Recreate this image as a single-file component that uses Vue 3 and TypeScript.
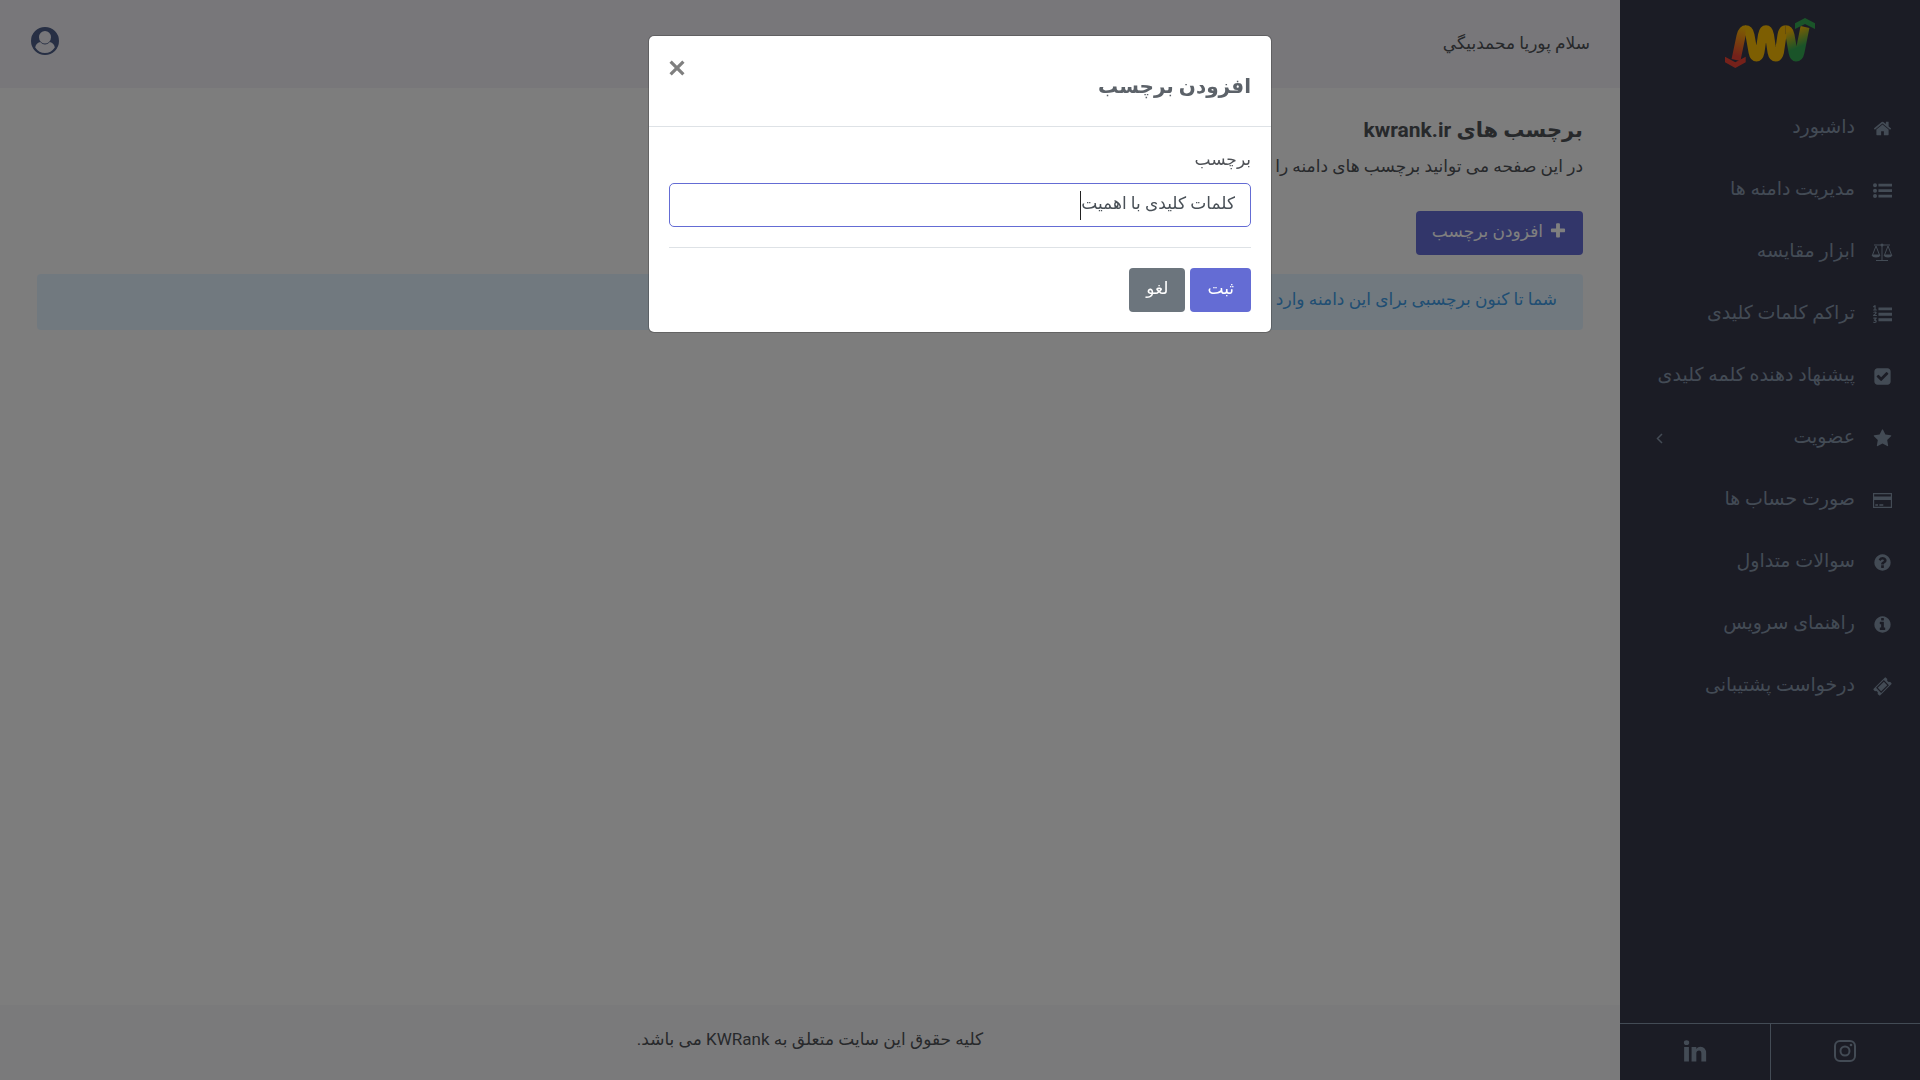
<script setup lang="ts">
import { ref } from 'vue'

interface MenuItem {
  label: string
  icon: string
  expandable?: boolean
}

const menu: MenuItem[] = [
  { label: 'داشبورد', icon: 'home' },
  { label: 'مدیریت دامنه ها', icon: 'list' },
  { label: 'ابزار مقایسه', icon: 'scale' },
  { label: 'تراکم کلمات کلیدی', icon: 'ordered' },
  { label: 'پیشنهاد دهنده کلمه کلیدی', icon: 'check' },
  { label: 'عضویت', icon: 'star', expandable: true },
  { label: 'صورت حساب ها', icon: 'card' },
  { label: 'سوالات متداول', icon: 'question' },
  { label: 'راهنمای سرویس', icon: 'info' },
  { label: 'درخواست پشتیبانی', icon: 'ticket' },
]

const icons: Record<string, string> = {
  home: 'M1472 992v480q0 26-19 45t-45 19h-384v-384h-256v384h-384q-26 0-45-19t-19-45v-480q0-1 .5-3t.5-3l575-474 575 474q1 2 1 6zm223-69l-62 74q-8 9-21 11h-3q-13 0-21-7l-692-577-692 577q-12 8-24 7-13-2-21-11l-62-74q-8-10-7-23.5t11-21.5l719-599q32-26 76-26t76 26l244 204v-195q0-14 9-23t23-9h192q14 0 23 9t9 23v408l219 182q10 8 11 21.5t-7 23.5z',
  list: 'M0 400a190 190 0 1 0 380 0a190 190 0 1 0-380 0zM0 912a190 190 0 1 0 380 0a190 190 0 1 0-380 0zM0 1424a190 190 0 1 0 380 0a190 190 0 1 0-380 0zM512 270h1280v260h-1280zM512 782h1280v260h-1280zM512 1294h1280v260h-1280z',
  ordered: 'M512 230h1280v270h-1280zM512 742h1280v270h-1280zM512 1254h1280v270h-1280zM130 20h120v400h110v90h-340v-90h110v-250l-80 60-60-70zM20 690q60-80 180-80 150 0 150 130 0 90-170 200h180v100h-350v-90q210-150 210-200 0-50-60-50-50 0-80 60zM30 1190h320v90l-110 110q120 30 120 150 0 160-180 160-110 0-170-60l60-90q50 50 100 50 70 0 70-60 0-70-150-60l-20-60 110-130h-150z',
  check: 'M813 1299l614-614q19-19 19-45t-19-45l-102-102q-19-19-45-19t-45 19l-467 467-211-211q-19-19-45-19t-45 19l-102 102q-19 19-19 45t19 45l358 358q19 19 45 19t45-19zm851-883v960q0 119-84.5 203.5t-203.5 84.5h-960q-119 0-203.5-84.5t-84.5-203.5v-960q0-119 84.5-203.5t203.5-84.5h960q119 0 203.5 84.5t84.5 203.5z',
  star: 'M1728 647q0 22-26 48l-363 354 86 500q1 7 1 20 0 21-10.5 35.5t-30.5 14.5q-19 0-40-12l-449-236-449 236q-22 12-40 12-21 0-31.5-14.5t-10.5-35.5q0-6 2-20l86-500-364-354q-25-27-25-48 0-37 56-46l502-73 225-455q19-41 49-41t49 41l225 455 502 73q56 9 56 46z',
  card: 'M0 200h1792v1400h-1792zM110 310v210h1572v-210zM110 850v640h1572v-640zM220 1260h250v130h-250zM600 1260h370v130h-370z',
  question: 'M1024 1376v-192q0-14-9-23t-23-9h-192q-14 0-23 9t-9 23v192q0 14 9 23t23 9h192q14 0 23-9t9-23zm256-672q0-88-55.5-163t-138.5-116-170-41q-243 0-371 213-15 24 8 42l132 100q7 6 19 6 16 0 25-12 53-68 86-92 34-24 86-24 48 0 85.5 26t37.5 59q0 38-20 61t-68 45q-63 28-115.5 86.5t-52.5 125.5v36q0 14 9 23t23 9h192q14 0 23-9t9-23q0-19 21.5-49.5t54.5-49.5q32-18 49-28.5t46-35 44.5-48 28-60.5 12.5-81zm384 192q0 209-103 385.5t-279.5 279.5-385.5 103-385.5-103-279.5-279.5-103-385.5 103-385.5 279.5-279.5 385.5-103 385.5 103 279.5 279.5 103 385.5z',
  info: 'M1152 1376v-160q0-14-9-23t-23-9h-96v-512q0-14-9-23t-23-9h-320q-14 0-23 9t-9 23v160q0 14 9 23t23 9h96v320h-96q-14 0-23 9t-9 23v160q0 14 9 23t23 9h448q14 0 23-9t9-23zm-128-896v-160q0-14-9-23t-23-9h-192q-14 0-23 9t-9 23v160q0 14 9 23t23 9h192q14 0 23-9t9-23zm640 416q0 209-103 385.5t-279.5 279.5-385.5 103-385.5-103-279.5-279.5-103-385.5 103-385.5 279.5-279.5 385.5-103 385.5 103 279.5 279.5 103 385.5z',
  ticket: 'M1024 452l316 316-572 572-316-316zM60 1100l1040-1040q60-50 120 0l130 130q-60 130 30 220t220 30l130 130q50 60 0 120l-1040 1040q-60 50-120 0l-130-130q60-130-30-220t-220-30l-130-130q-50-60 0-120zM290 1024l478 478 734-734-478-478z',
  plus: 'M1600 736v192q0 40-28 68t-68 28h-416v416q0 40-28 68t-68 28h-192q-40 0-68-28t-28-68v-416h-416q-40 0-68-28t-28-68v-192q0-40 28-68t68-28h416v-416q0-40 28-68t68-28h192q40 0 68 28t28 68v416h416q40 0 68 28t28 68z',
  linkedin: 'M477 625v991h-330v-991h330zm21-306q1 73-50.5 122t-135.5 49h-2q-82 0-132-49t-50-122q0-74 51.5-122.5t134.5-48.5 133 48.5 51 122.5zm1166 729v568h-329v-530q0-105-40.5-164.5t-126.5-59.5q-63 0-105.5 34.5t-63.5 85.5q-11 30-11 81v553h-329q2-399 2-647t-1-296l-1-48h329v144h-2q20-32 41-56t56.5-52 87-43.5 114.5-15.5q171 0 275 113.5t104 332.5z',
}

const tag = ref('کلمات کلیدی با اهمیت')
const open = ref(true)
</script>

<template>
  <div class="app" dir="rtl" lang="fa">
    <aside class="sidebar">
      <a class="logo" href="#" aria-label="KWRank">
        <svg viewBox="0 0 90 50" width="90" height="50">
          <defs>
            <linearGradient id="left-leg" gradientUnits="userSpaceOnUse" x1="11" y1="41" x2="20" y2="10">
              <stop offset="0.1" stop-color="#ea4335" />
              <stop offset="1" stop-color="#fbbc05" />
            </linearGradient>
            <linearGradient id="right-leg" gradientUnits="userSpaceOnUse" x1="60" y1="12" x2="69" y2="34">
              <stop offset="0.1" stop-color="#fbbc05" />
              <stop offset="0.9" stop-color="#34a853" />
            </linearGradient>
          </defs>
          <g fill="none" stroke-width="9">
            <path d="M60.500 11.700Q64 11.700 65 17L68 34Q69 39 71 39Q74 39 75 34L80 9" stroke="url(#right-leg)" />
            <path d="M11 42L16 18Q17.500 11.700 21 11.700" stroke="url(#left-leg)" />
            <path d="M20.500 11.700Q24 11.700 25 17L28 34Q29 39 31.500 39T35 34L37.500 17Q38.500 11.700 41 11.700T44.500 17L47 34Q48 39 50.700 39T54.500 34L57 17Q58 11.700 60.500 11.700" stroke="#fbbc05" />
          </g>
          <path d="M70 11V5.300L80 0L90 5.300V11L80 6Z" fill="#34a853" />
          <path d="M0 38.700L10.300 44.300L20.700 38.700V44.300L10.300 50L0 44.300Z" fill="#ea4335" />
        </svg>
      </a>

      <nav>
        <a v-for="item in menu" :key="item.label" class="item" href="#">
          <svg v-if="item.icon === 'scale'" class="icon scale" viewBox="0 0 22 19" fill="none" stroke="currentColor">
            <path d="M3 2H19M11 1V17M5 17.500H17M5 3L1.500 12H8.500ZM17 3L13.500 12H20.500Z" />
            <path d="M.5 12H9.500Q8.500 14.500 5 14.500T.5 12ZM12.500 12H21.500Q20.500 14.500 17 14.500T12.500 12Z" fill="currentColor" stroke="none" />
            <circle cx="11" cy="2" r="1.500" fill="currentColor" stroke="none" />
          </svg>
          <svg v-else class="icon" viewBox="0 0 1792 1792">
            <path :d="icons[item.icon]" fill="currentColor" fill-rule="evenodd" />
          </svg>
          <span class="label">{{ item.label }}</span>
          <svg v-if="item.expandable" class="chevron" viewBox="0 0 7 11" fill="none" stroke="currentColor" stroke-width="1.500">
            <path d="M6 1L1.500 5.500L6 10" />
          </svg>
        </a>
      </nav>

      <div class="social">
        <a href="#" aria-label="Instagram">
          <svg viewBox="0 0 22 22" width="22" height="22" fill="none" stroke="currentColor" stroke-width="2">
            <rect x="1" y="1" width="20" height="20" rx="5" />
            <circle cx="11" cy="11" r="4.500" />
            <circle cx="17" cy="5" r="1.300" fill="currentColor" stroke="none" />
          </svg>
        </a>
        <a href="#" aria-label="LinkedIn">
          <svg viewBox="0 0 1792 1792" width="26" height="26"><path :d="icons.linkedin" fill="currentColor" /></svg>
        </a>
      </div>
    </aside>

    <div class="page">
      <header class="topbar">
        <span class="greeting">سلام پوریا محمدبیگي</span>
        <a class="account" href="#" aria-label="حساب کاربری">
          <svg viewBox="0 0 28 28" width="28" height="28">
            <path fill="currentColor" fill-rule="evenodd" d="M14 0A14 14 0 1 1 14 28A14 14 0 1 1 14 0ZM14 4A6 6.300 0 1 0 14 16.600A6 6.300 0 1 0 14 4ZM9.200 15Q4.800 16 4.200 20.500Q8 26 14 26T23.800 20.500Q23.200 16 18.800 15Q16.500 17.500 14 17.500T9.200 15Z" />
          </svg>
        </a>
      </header>

      <main class="content">
        <h1>برچسب های kwrank.ir</h1>
        <p>در این صفحه می توانید برچسب های دامنه را مدیریت کنید.</p>
        <button class="btn primary" type="button" @click="open = true">
          <svg viewBox="0 0 1792 1792" width="18" height="18"><path :d="icons.plus" fill="currentColor" /></svg>
          افزودن برچسب
        </button>
        <div class="alert">شما تا کنون برچسبی برای این دامنه وارد نکرده اید.</div>
      </main>

      <footer class="footer">کلیه حقوق این سایت متعلق به KWRank می باشد.</footer>
    </div>

    <div v-if="open" class="backdrop">
      <form class="modal" role="dialog" aria-labelledby="modal-title" @submit.prevent="open = false">
        <div class="modal-head">
          <h2 id="modal-title">افزودن برچسب</h2>
          <button class="close" type="button" aria-label="بستن" @click="open = false">
            <svg viewBox="0 0 15 15" width="16" height="16"><path d="M1.500 1.500L13.500 13.500M13.500 1.500L1.500 13.500" fill="none" stroke="currentColor" stroke-width="3" /></svg>
          </button>
        </div>
        <div class="modal-body">
          <label for="tag">برچسب</label>
          <div class="field">
            <input id="tag" v-model="tag" type="text" />
            <span class="caret"></span>
          </div>
          <hr />
          <div class="actions">
            <button class="btn primary" type="submit">ثبت</button>
            <button class="btn secondary" type="button" @click="open = false">لغو</button>
          </div>
        </div>
      </form>
    </div>
  </div>
</template>

<style>
body {
  margin: 0;
}
</style>

<style scoped>
* {
  box-sizing: border-box;
}
.app {
  display: flex;
  min-height: 100vh;
  background: #fafafb;
  color: #4f5257;
  font-family: Roboto, "DejaVu Sans", sans-serif;
  font-size: 17px;
  line-height: 28px;
}
a {
  color: inherit;
  text-decoration: none;
}
button,
input {
  font: inherit;
}
svg {
  display: block;
  flex: none;
}
.sidebar {
  display: flex;
  flex-direction: column;
  flex: none;
  width: 300px;
  background: #37384a;
  color: #8696aa;
}
.logo {
  display: flex;
  justify-content: center;
  padding: 18px 0 29px;
}
.item {
  display: flex;
  align-items: center;
  height: 62px;
  padding: 0 28px 0 36px;
  font-size: 19px;
}
.icon {
  width: 19px;
  height: 19px;
}
.scale {
  width: 22px;
  margin: 0 -1px 0 -2px;
}
.label {
  flex: 1;
  margin-right: 18px;
  padding-bottom: 2px;
  white-space: nowrap;
}
.chevron {
  width: 7px;
  height: 11px;
}
.social {
  display: flex;
  margin-top: auto;
  border-top: 1px solid #8696aa;
}
.social a {
  display: flex;
  flex: 1;
  align-items: center;
  justify-content: center;
  height: 56px;
  padding-bottom: 2px;
}
.social a + a {
  border-right: 1px solid #8696aa;
}
.page {
  display: flex;
  flex: 1;
  flex-direction: column;
  min-width: 0;
}
.topbar {
  display: flex;
  align-items: center;
  justify-content: space-between;
  height: 88px;
  padding: 0 30px 6px 31px;
  background: #f0eff5;
}
.greeting {
  padding-top: 4px;
}
.account {
  color: #4f5f88;
}
.content {
  flex: 1;
  padding: 24px 37px;
}
h1,
h2,
p {
  margin: 0;
}
h1 {
  font-size: 21px;
  font-weight: 700;
  line-height: 36px;
}
p {
  margin: 4px 0 31px;
}
.btn {
  display: flex;
  align-items: center;
  justify-content: center;
  gap: 6px;
  height: 44px;
  padding: 0 16px 4px;
  border: 0;
  border-radius: 4px;
  color: #fff;
}
.primary {
  background: #646cd4;
}
.secondary {
  background: #6c757d;
}
.alert {
  height: 56px;
  margin-top: 19px;
  padding: 11px 26px;
  border-radius: 4px;
  background: #e3f3ff;
  color: #409ce6;
}
.footer {
  height: 75px;
  padding-top: 20px;
  background: #f5f5f7;
  text-align: center;
}
.backdrop {
  position: fixed;
  inset: 0;
  padding: 35px 20px;
  background: rgba(0, 0, 0, 0.5);
}
.modal {
  max-width: 624px;
  margin: 0 auto;
  border: 1px solid rgba(0, 0, 0, 0.2);
  border-radius: 6px;
  background: #fff;
  background-clip: padding-box;
}
.modal-head {
  display: flex;
  justify-content: space-between;
  height: 91px;
  padding: 30px 20px 0;
  border-bottom: 1px solid #dee2e6;
}
h2 {
  color: #5c6269;
  font-size: 20px;
  line-height: 40px;
}
.close {
  width: 16px;
  height: 16px;
  margin-top: -6px;
  padding: 0;
  border: 0;
  background: none;
  color: #7f7f7f;
}
.modal-body {
  padding: 20px;
}
label {
  display: block;
  margin-bottom: 12px;
  line-height: 24px;
}
.field {
  display: flex;
  align-items: center;
  height: 44px;
  padding: 0 15px;
  border: 1px solid #646cd4;
  border-radius: 5px;
}
.field input {
  field-sizing: content;
  padding: 0 0 4px;
  border: 0;
  outline: 0;
  background: none;
  color: #495057;
  caret-color: transparent;
}
.caret {
  width: 1px;
  height: 29px;
  background: #222;
}
hr {
  margin: 20px 0;
  border: 0;
  border-top: 1px solid #dee2e6;
}
.actions {
  display: flex;
  gap: 5px;
}
.actions .btn {
  padding: 0 17px 4px;
}
</style>
